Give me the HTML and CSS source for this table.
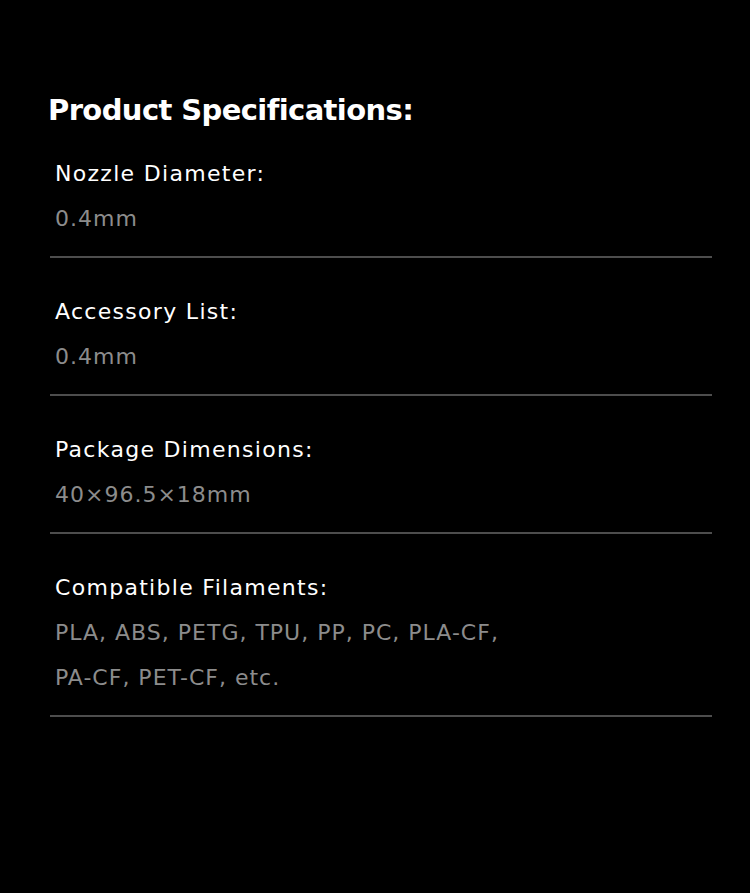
FILE: index.html
```html
<!DOCTYPE html>
<html lang="en">
<head>
<meta charset="utf-8">
<title>Product Specifications</title>
<link rel="stylesheet" href="styles.css">
</head>
<body>
<section class="specs">
  <h2 class="specs-title">Product Specifications:</h2>
  <div class="spec-item">
    <div class="spec-label">Nozzle Diameter:</div>
    <div class="spec-value">0.4mm</div>
  </div>
  <div class="spec-item">
    <div class="spec-label">Accessory List:</div>
    <div class="spec-value">0.4mm</div>
  </div>
  <div class="spec-item">
    <div class="spec-label">Package Dimensions:</div>
    <div class="spec-value">40×96.5×18mm</div>
  </div>
  <div class="spec-item">
    <div class="spec-label">Compatible Filaments:</div>
    <div class="spec-value">PLA, ABS, PETG, TPU, PP, PC, PLA-CF,<br>PA-CF, PET-CF, etc.</div>
  </div>
</section>
</body>
</html>
```
FILE: styles.css
```css
html, body {
  margin: 0;
  padding: 0;
  background: #000;
  height: 100%;
}
body {
  font-family: "DejaVu Sans", "Open Sans", sans-serif;
  color: #fff;
}
.specs {
  width: 662px;
  margin-left: 50px;
  padding-top: 90px;
}
.specs-title {
  margin: 0 0 -10px -2px;
  font-size: 29px;
  line-height: 40px;
  font-weight: 700;
  letter-spacing: -0.6px;
  color: #fff;
}
.spec-item {
  padding: 32px 0 15px 5px;
  border-bottom: 2px solid #4d4d4d;
}
.spec-label {
  font-size: 22px;
  line-height: 44px;
  letter-spacing: 1.3px;
  color: #fff;
}
.spec-value {
  font-size: 22px;
  line-height: 45px;
  letter-spacing: 1px;
  color: #8c8c8c;
}
```
